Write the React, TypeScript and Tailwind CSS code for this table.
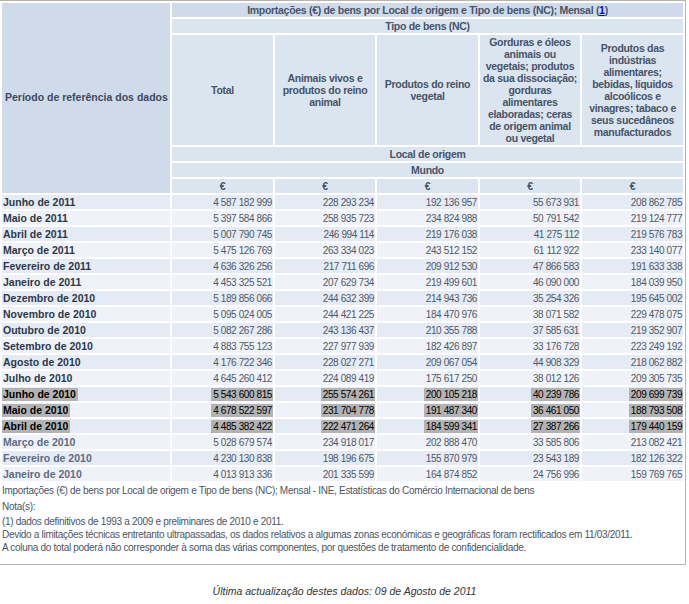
const rows: [string, string, string, string, string, string][] = [
  ["Junho de 2011", "4 587 182 999", "228 293 234", "192 136 957", "55 673 931", "208 862 785"],
  ["Maio de 2011", "5 397 584 866", "258 935 723", "234 824 988", "50 791 542", "219 124 777"],
  ["Abril de 2011", "5 007 790 745", "246 994 114", "219 176 038", "41 275 112", "219 576 783"],
  ["Março de 2011", "5 475 126 769", "263 334 023", "243 512 152", "61 112 922", "233 140 077"],
  ["Fevereiro de 2011", "4 636 326 256", "217 711 696", "209 912 530", "47 866 583", "191 633 338"],
  ["Janeiro de 2011", "4 453 325 521", "207 629 734", "219 499 601", "46 090 000", "184 039 950"],
  ["Dezembro de 2010", "5 189 856 066", "244 632 399", "214 943 736", "35 254 326", "195 645 002"],
  ["Novembro de 2010", "5 095 024 005", "244 421 225", "184 470 976", "38 071 582", "229 478 075"],
  ["Outubro de 2010", "5 082 267 286", "243 136 437", "210 355 788", "37 585 631", "219 352 907"],
  ["Setembro de 2010", "4 883 755 123", "227 977 939", "182 426 897", "33 176 728", "223 249 192"],
  ["Agosto de 2010", "4 176 722 346", "228 027 271", "209 067 054", "44 908 329", "218 062 882"],
  ["Julho de 2010", "4 645 260 412", "224 089 419", "175 617 250", "38 012 126", "209 305 735"],
  ["Junho de 2010", "5 543 600 815", "255 574 261", "200 105 218", "40 239 786", "209 699 739"],
  ["Maio de 2010", "4 678 522 597", "231 704 778", "191 487 340", "36 461 050", "188 793 508"],
  ["Abril de 2010", "4 485 382 422", "222 471 264", "184 599 341", "27 387 266", "179 440 159"],
  ["Março de 2010", "5 028 679 574", "234 918 017", "202 888 470", "33 585 806", "213 082 421"],
  ["Fevereiro de 2010", "4 230 130 838", "198 196 675", "155 870 979", "23 543 189", "182 126 322"],
  ["Janeiro de 2010", "4 013 913 336", "201 335 599", "164 874 852", "24 756 996", "159 769 765"],
];

// rows 12-14 are the selected ones, 15-17 have a faded label
const selected = [12, 13, 14];
const faded = [15, 16, 17];

const headers: string[][] = [
  ["Total"],
  ["Animais vivos e", "produtos do reino", "animal"],
  ["Produtos do reino", "vegetal"],
  [
    "Gorduras e óleos",
    "animais ou",
    "vegetais; produtos",
    "da sua dissociação;",
    "gorduras",
    "alimentares",
    "elaboradas; ceras",
    "de origem animal",
    "ou vegetal",
  ],
  [
    "Produtos das",
    "indústrias",
    "alimentares;",
    "bebidas, líquidos",
    "alcoólicos e",
    "vinagres; tabaco e",
    "seus sucedâneos",
    "manufacturados",
  ],
];

const hd =
  "bg-[#dbe5f0] text-[#465468] font-bold text-[10.5px] tracking-[-0.3px] text-center h-[14px] leading-[14px] p-0";

export default function App() {
  return (
    <div className="w-[689px] bg-white font-['Liberation_Sans',Arial,sans-serif]">
      <div className="w-[686px] border-y border-r border-[#b4b4b4]">
        <table className="table-fixed border-separate border-spacing-[2px] w-[685px]">
          <colgroup>
            <col className="w-[168px]" />
            <col className="w-[101px]" />
            <col className="w-[100px]" />
            <col className="w-[101px]" />
            <col className="w-[100px]" />
            <col className="w-[101px]" />
          </colgroup>
          <thead>
            <tr>
              <th
                rowSpan={6}
                className="bg-[#cfdbeb] text-[#3c4a5d] font-bold text-[10.5px] text-left align-middle pl-[3px]"
              >
                Período de referência dos dados
              </th>
              <th
                colSpan={5}
                className="bg-[#cfdbeb] text-[#465468] font-bold text-[10.5px] tracking-[-0.3px] text-center h-[14px] leading-[14px] p-0"
              >
                Importações (€) de bens por Local de origem e Tipo de bens (NC); Mensal (
                <a href="#" className="text-[#0000ee] underline">1</a>)
              </th>
            </tr>
            <tr>
              <th colSpan={5} className={hd}>Tipo de bens (NC)</th>
            </tr>
            <tr>
              {headers.map((lines, i) => (
                <th
                  key={i}
                  className="bg-[#dbe5f0] text-[#465468] font-bold text-[10.5px] tracking-[-0.3px] leading-[12px] text-center align-middle py-px px-0 whitespace-nowrap"
                >
                  {lines.map((l, j) => (
                    <div key={j}>{l}</div>
                  ))}
                </th>
              ))}
            </tr>
            <tr>
              <th colSpan={5} className={hd}>Local de origem</th>
            </tr>
            <tr>
              <th colSpan={5} className={hd}>Mundo</th>
            </tr>
            <tr>
              {[0, 1, 2, 3, 4].map((i) => (
                <th key={i} className={hd}>€</th>
              ))}
            </tr>
          </thead>
          <tbody>
            {rows.map((r, i) => {
              const sel = selected.includes(i);
              const bg = i % 2 === 0 ? "bg-[#e4ebf5]" : "bg-[#eff3f9]";
              const labelColor = faded.includes(i) ? "text-[#5c6c82]" : "text-[#2c3848]";
              return (
                <tr key={r[0]}>
                  <td className={`${bg} p-0 h-[14px] text-[10.5px] font-bold leading-[13px] whitespace-nowrap ${labelColor}`}>
                    <span className={sel ? "inline-block bg-[#b3b3b3] text-black pl-px pr-[2px]" : "inline-block pl-px"}>
                      {r[0]}
                    </span>
                  </td>
                  {r.slice(1).map((v, j) => (
                    <td
                      key={j}
                      className={`${bg} p-0 h-[14px] text-right text-[10px] tracking-[-0.4px] leading-[13px] whitespace-nowrap text-[#4f5967]`}
                    >
                      <span className={sel ? "inline-block bg-[#b3b3b3] text-black pl-[2px] pr-px" : "inline-block pr-px"}>
                        {v}
                      </span>
                    </td>
                  ))}
                </tr>
              );
            })}
          </tbody>
        </table>
        <div className="pl-[2px] text-[10px] tracking-[-0.3px] text-[#4b5563] pb-[10px]">
          <div className="leading-[16px]">
            Importações (€) de bens por Local de origem e Tipo de bens (NC); Mensal - INE, Estatísticas do Comércio
            Internacional de bens
          </div>
          <div className="leading-[16px]">Nota(s):</div>
          <div className="leading-[13px]">
            <div>(1) dados definitivos de 1993 a 2009 e preliminares de 2010 e 2011.</div>
            <div>
              Devido a limitações técnicas entretanto ultrapassadas, os dados relativos a algumas zonas económicas e
              geográficas foram rectificados em 11/03/2011.
            </div>
            <div>
              A coluna do total poderá não corresponder à soma das várias componentes, por questões de tratamento de
              confidencialidade.
            </div>
          </div>
        </div>
      </div>
      <div className="mt-[20px] text-center italic text-[10.5px] leading-[13px] text-[#333]">
        Última actualização destes dados: 09 de Agosto de 2011
      </div>
    </div>
  );
}
